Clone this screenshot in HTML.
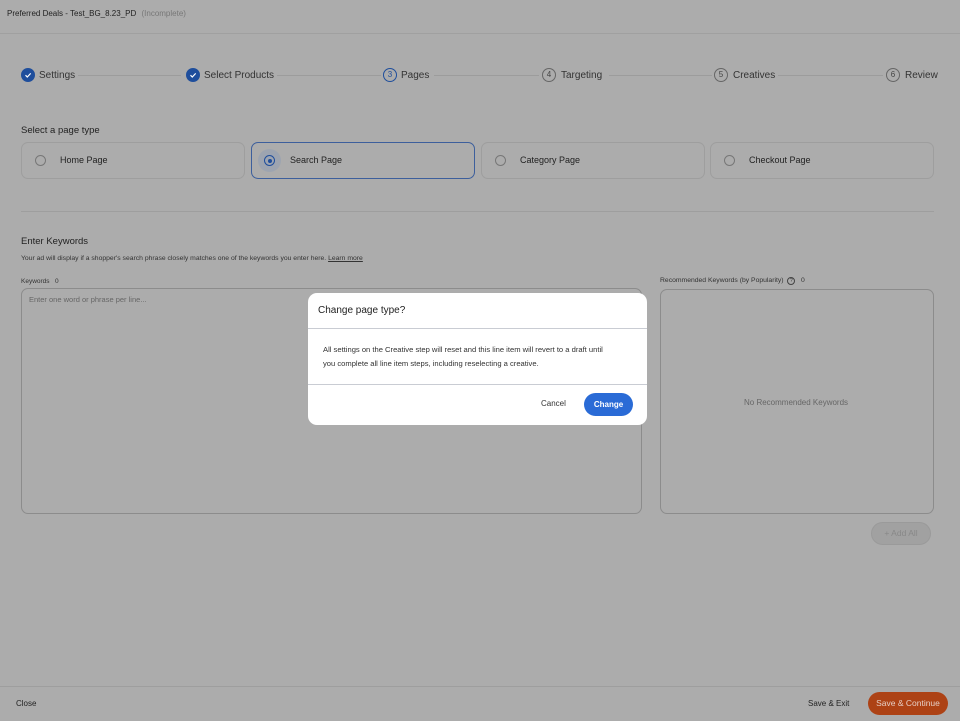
<!DOCTYPE html>
<html><head><style>
*{margin:0;padding:0;box-sizing:border-box}
html,body{background:#acacac}
body{width:960px;height:721px;font-family:"Liberation Sans",sans-serif;color:#262626;position:relative;overflow:hidden}
.a{position:absolute;white-space:nowrap}
.circ{position:absolute;width:14px;height:14px;border-radius:50%;border:1px solid #666;font-size:8px;text-align:center;line-height:12px;color:#444}
.done{background:#1f4e9c;border-color:#1f4e9c}
.line{position:absolute;height:1px;background:#9c9c9c;top:75px}
.card{position:absolute;top:142px;height:37px;border:1px solid #9e9e9e;border-radius:7px}
.card .r{position:absolute;left:13px;top:12px;width:11px;height:11px;border-radius:50%;border:1px solid #777}
.card span{position:absolute;left:38px;top:12px;font-size:9px;color:#222}
.st{font-size:10px;color:#333;top:70px}
</style></head><body>
<div class="a" style="left:7px;top:9px;font-size:8px;color:#222">Preferred Deals - Test_BG_8.23_PD <span style="color:#777;margin-left:3px">(Incomplete)</span></div>
<div class="a" style="left:0;top:33px;width:960px;height:1px;background:#a0a0a0"></div>

<div class="circ done" style="left:21px;top:68px"><svg width="12" height="12" viewBox="0 0 12 12"><path d="M3.5 6.2l1.8 1.8 3.4-3.6" stroke="#fff" stroke-width="1.2" fill="none"/></svg></div>
<div class="a st" style="left:39px">Settings</div>
<div class="line" style="left:78px;width:103px"></div>
<div class="circ done" style="left:186px;top:68px"><svg width="12" height="12" viewBox="0 0 12 12"><path d="M3.5 6.2l1.8 1.8 3.4-3.6" stroke="#fff" stroke-width="1.2" fill="none"/></svg></div>
<div class="a st" style="left:204px">Select Products</div>
<div class="line" style="left:277px;width:104px"></div>
<div class="circ" style="left:383px;top:68px;border-color:#1f4e9c;color:#1f4e9c">3</div>
<div class="a st" style="left:401px">Pages</div>
<div class="line" style="left:434px;width:105px"></div>
<div class="circ" style="left:542px;top:68px">4</div>
<div class="a st" style="left:561px">Targeting</div>
<div class="line" style="left:609px;width:103px"></div>
<div class="circ" style="left:714px;top:68px">5</div>
<div class="a st" style="left:733px">Creatives</div>
<div class="line" style="left:778px;width:105px"></div>
<div class="circ" style="left:886px;top:68px">6</div>
<div class="a st" style="left:905px">Review</div>

<div class="a" style="left:21px;top:125px;font-size:9.5px;color:#222">Select a page type</div>
<div class="card" style="left:21px;width:224px"><div class="r"></div><span>Home Page</span></div>
<div class="card" style="left:251px;width:224px;border-color:#3d5f9c"><div style="position:absolute;left:6px;top:6px;width:23px;height:23px;border-radius:50%;background:#9da4b0"></div><div class="r" style="border-color:#1f4e9c;left:12px"><div style="width:4px;height:4px;border-radius:50%;background:#1f4e9c;margin:2.5px"></div></div><span>Search Page</span></div>
<div class="card" style="left:481px;width:224px"><div class="r"></div><span>Category Page</span></div>
<div class="card" style="left:710px;width:224px"><div class="r"></div><span>Checkout Page</span></div>
<div class="a" style="left:21px;top:211px;width:913px;height:1px;background:#9e9e9e"></div>

<div class="a" style="left:21px;top:236px;font-size:9.5px;color:#222">Enter Keywords</div>
<div class="a" style="left:21px;top:255px;font-size:6.8px;color:#333">Your ad will display if a shopper's search phrase closely matches one of the keywords you enter here. <u>Learn more</u></div>
<div class="a" style="left:21px;top:278px;font-size:6.5px;color:#333">Keywords &nbsp; 0</div>
<div class="a" style="left:21px;top:288px;width:621px;height:226px;border:1px solid #8c8c8c;border-radius:7px"></div>
<div class="a" style="left:29px;top:295px;font-size:7.5px;color:#666">Enter one word or phrase per line...</div>
<div class="a" style="left:660px;top:277px;font-size:6.8px;color:#333">Recommended Keywords (by Popularity) &nbsp;<span style="display:inline-block;width:8px;height:8px;border:1px solid #444;border-radius:50%;font-size:5px;text-align:center;line-height:7px">?</span> &nbsp; 0</div>
<div class="a" style="left:660px;top:289px;width:274px;height:225px;border:1px solid #8c8c8c;border-radius:7px"></div>
<div class="a" style="left:744px;top:398px;font-size:8px;color:#666">No Recommended Keywords</div>
<div class="a" style="left:871px;top:522px;width:60px;height:23px;border-radius:12px;background:#a1a1a1;border:1px solid #9a9a9a;font-size:8.5px;color:#888;text-align:center;line-height:21px">+ Add All</div>

<div class="a" style="left:0;top:686px;width:960px;height:1px;background:#9e9e9e"></div>
<div class="a" style="left:16px;top:699px;font-size:8px;color:#222">Close</div>
<div class="a" style="left:808px;top:699px;font-size:8px;color:#222">Save &amp; Exit</div>
<div class="a" style="left:868px;top:692px;width:80px;height:23px;border-radius:12px;background:#ad4215;color:#e6cfc6;font-size:8.5px;text-align:center;line-height:23px">Save &amp; Continue</div>

<div class="a" style="left:308px;top:293px;width:339px;height:132px;background:#fff;border-radius:9px;overflow:hidden">
<div class="a" style="left:10px;top:12px;font-size:10px;color:#222">Change page type?</div>
<div class="a" style="left:0;top:35px;width:339px;height:1px;background:#c9ccd3"></div>
<div class="a" style="left:15px;top:50px;font-size:7.6px;color:#333;line-height:14px">All settings on the Creative step will reset and this line item will revert to a draft until<br>you complete all line item steps, including reselecting a creative.</div>
<div class="a" style="left:0;top:91px;width:339px;height:1px;background:#c9ccd3"></div>
<div class="a" style="left:233px;top:106px;font-size:8px;color:#333">Cancel</div>
<div class="a" style="left:276px;top:100px;width:49px;height:23px;border-radius:12px;background:#2a6bd6;color:#fff;font-size:8px;font-weight:bold;text-align:center;line-height:23px">Change</div>
</div>
</body></html>
